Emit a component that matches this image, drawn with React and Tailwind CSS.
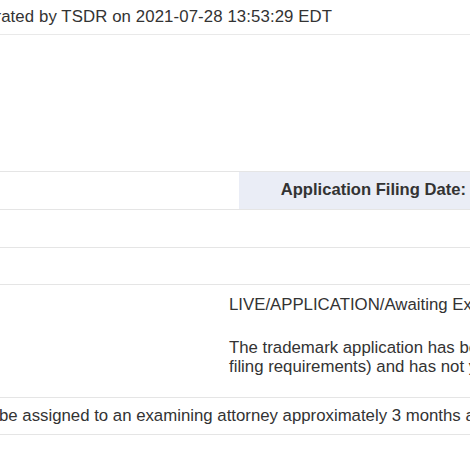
import React from "react";

// Fragmento de la pagina de estado TSDR (recortada)
const Row = (props) => {
  return (
    <div className={`flex border-b border-[#e5e5e5] ${props.className || ""}`}>
      {props.children}
    </div>
  );
};

export default function App() {
  return (
    <div
      className="w-[470px] h-[470px] overflow-hidden bg-white text-[#333] text-[16.8px]"
      style={{ fontFamily: '"Liberation Sans", Arial, sans-serif' }}
    >
      {/* cabecera */}
      <div className="h-[35px] border-b border-[#e9e9e9] flex items-center whitespace-nowrap">
        <span className="ml-[-46px] tracking-[0.1px]">Generated by TSDR on 2021-07-28 13:53:29 EDT</span>
      </div>

      <div className="h-[136px]" />

      <div className="border-t border-[#e5e5e5]">
        <Row className="h-[38px]">
          <div className="w-[239px] shrink-0" />
          <div className="flex-1 bg-[#eaedf6] flex items-center justify-end pr-[4px] font-bold whitespace-nowrap text-[16.6px]">
            Application Filing Date:
          </div>
        </Row>
        <Row className="h-[38px]" />
        <Row className="h-[37px]" />
        <Row className="h-[113px]">
          <div className="pl-[229px] pt-[10px] whitespace-nowrap leading-[19px]">
            <div>LIVE/APPLICATION/Awaiting Examination</div>
            <div className="mt-[24px] leading-[19px]">
              The trademark application has been accepted by the Office (has met the minimum
              <br />
              filing requirements) and has not yet been assigned to an examiner.
            </div>
          </div>
        </Row>
        <Row className="h-[37px] items-center">
          <div className="whitespace-nowrap ml-[-1px]">
            be assigned to an examining attorney approximately 3 months after filing date.
          </div>
        </Row>
      </div>
    </div>
  );
}
